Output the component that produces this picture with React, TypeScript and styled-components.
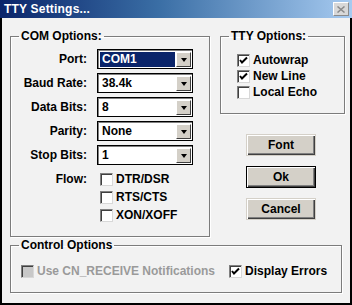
import React from 'react'
import styled, { createGlobalStyle } from 'styled-components'

const GlobalStyle = createGlobalStyle`
  html, body {
    margin: 0;
    padding: 0;
    background: #f2f2f2;
  }
  body {
    font-family: 'Liberation Sans', Arial, sans-serif;
    font-size: 12px;
    font-weight: bold;
    color: #000;
  }
`

const Window = styled.div`
  width: 352px;
  height: 305px;
  box-sizing: border-box;
  border: 2px solid #000;
  border-top: none;
  background: #f2f2f2;
  display: flex;
  flex-direction: column;
`

const TitleBar = styled.div`
  height: 18px;
  margin: 0 -2px;
  padding: 0 3px 0 4px;
  display: flex;
  align-items: center;
  justify-content: space-between;
  background: linear-gradient(to right, #0a246a 0%, #3a6ea5 45%, #a6caf0 100%);
  color: #fff;
  font-size: 12px;
  letter-spacing: 0.2px;
`

const CloseButton = styled.div`
  width: 16px;
  height: 14px;
  box-sizing: border-box;
  background: #d8d8d8;
  border: 1px solid;
  border-color: #fff #8a8a8a #8a8a8a #fff;
  display: flex;
  align-items: center;
  justify-content: center;
`

const Body = styled.div`
  padding: 11px 0 0 8px;
  display: grid;
  grid-template-columns: 200px 125px;
  column-gap: 10px;
`

const Group = styled.fieldset<{ $h: number }>`
  margin: 0;
  padding: 0;
  height: ${({ $h }) => $h}px;
  box-sizing: border-box;
  border: 1px solid #7c7c7c;
  box-shadow: inset 1px 1px 0 #fff, 1px 1px 0 #fff;
  min-width: 0;
`

const Legend = styled.legend`
  margin-left: 8px;
  padding: 0 2px;
  font-size: 12px;
  line-height: 14px;
`

const ComGrid = styled.div`
  display: grid;
  grid-template-columns: 76px 96px;
  column-gap: 10px;
  row-gap: 4px;
  align-items: center;
  padding: 6px 0 0 0;
`

const Label = styled.div`
  text-align: right;
  line-height: 20px;
  align-self: start;
`

const Combo = styled.div`
  height: 20px;
  box-sizing: border-box;
  border: 1px solid #000;
  box-shadow: inset 1px 1px 0 #808080;
  background: #fff;
  display: flex;
  align-items: stretch;
  padding: 2px 1px 1px 2px;
`

const ComboValue = styled.div<{ $selected?: boolean }>`
  flex: 1;
  padding-left: 2px;
  line-height: 15px;
  background: ${({ $selected }) => ($selected ? '#0a246a' : 'transparent')};
  color: ${({ $selected }) => ($selected ? '#fff' : '#000')};
  margin-right: 1px;
`

const DropButton = styled.div`
  width: 15px;
  box-sizing: border-box;
  background: #d4d0c8;
  border: 1px solid;
  border-color: #fff #404040 #404040 #fff;
  display: flex;
  align-items: center;
  justify-content: center;
`

const Arrow = styled.div`
  width: 0;
  height: 0;
  border-left: 3px solid transparent;
  border-right: 3px solid transparent;
  border-top: 4px solid #000;
`

const CheckList = styled.div`
  display: flex;
  flex-direction: column;
  gap: 4px;
  align-self: start;
  padding: 3px 0 0 3px;
`

const CheckRow = styled.label<{ $disabled?: boolean }>`
  display: flex;
  align-items: center;
  gap: 3px;
  line-height: 14px;
  color: ${({ $disabled }) => ($disabled ? '#9a9a9a' : '#000')};
  white-space: nowrap;
`

const Box = styled.span<{ $disabled?: boolean }>`
  width: 13px;
  height: 13px;
  box-sizing: border-box;
  border: 1px solid;
  border-color: #808080 #d8d8d8 #d8d8d8 #808080;
  box-shadow: inset 1px 1px 0 #404040;
  background: ${({ $disabled }) => ($disabled ? '#c8c8c8' : '#fff')};
  display: flex;
  align-items: center;
  justify-content: center;
  flex: none;
`

const TtyList = styled.div`
  display: flex;
  flex-direction: column;
  gap: 2px;
  padding: 10px 0 0 16px;
`

const Buttons = styled.div`
  display: flex;
  flex-direction: column;
  gap: 10px;
  padding: 20px 0 0 26px;
`

const Button = styled.div<{ $default?: boolean }>`
  width: 70px;
  height: 22px;
  box-sizing: border-box;
  background: #d4d0c8;
  border: 1px solid ${({ $default }) => ($default ? '#000' : 'transparent')};
  box-shadow: inset 1px 1px 0 #fff, inset -1px -1px 0 #404040, inset -2px -2px 0 #808080;
  display: flex;
  align-items: center;
  justify-content: center;
  font-size: 12px;
`

const ControlGroup = styled(Group)`
  grid-column: span 2;
  margin-top: -10px;
  width: 332px;
`

const ControlRow = styled.div`
  display: flex;
  align-items: center;
  padding: 12px 0 0 10px;
  gap: 14px;
`

const Check = ({ on }: { on?: boolean }) => (
  <svg width="9" height="9" viewBox="0 0 9 9">
    {on && <path d="M1 4 L3 6.5 L8 1.5" stroke="#000" strokeWidth="2" fill="none" />}
  </svg>
)

const CheckBox = ({ label, on, disabled }: { label: string; on?: boolean; disabled?: boolean }) => (
  <CheckRow $disabled={disabled}>
    <Box $disabled={disabled}>
      <Check on={on} />
    </Box>
    {label}
  </CheckRow>
)

const ComboBox = ({ value, selected }: { value: string; selected?: boolean }) => (
  <Combo>
    <ComboValue $selected={selected}>{value}</ComboValue>
    <DropButton>
      <Arrow />
    </DropButton>
  </Combo>
)

const comFields = [
  { label: 'Port:', value: 'COM1', selected: true },
  { label: 'Baud Rate:', value: '38.4k' },
  { label: 'Data Bits:', value: '8' },
  { label: 'Parity:', value: 'None' },
  { label: 'Stop Bits:', value: '1' },
]

const App = () => {
  return (
    <>
      <GlobalStyle />
      <Window>
        <TitleBar>
          <span>TTY Settings...</span>
          <CloseButton>
            <svg width="8" height="7" viewBox="0 0 8 7">
              <path d="M0.5 0.5 L7.5 6.5 M7.5 0.5 L0.5 6.5" stroke="#8a8a8a" strokeWidth="1.5" />
            </svg>
          </CloseButton>
        </TitleBar>
        <Body>
          <Group $h={208}>
            <Legend>COM Options:</Legend>
            <ComGrid>
              {comFields.map((f) => (
                <React.Fragment key={f.label}>
                  <Label>{f.label}</Label>
                  <ComboBox value={f.value} selected={f.selected} />
                </React.Fragment>
              ))}
              <Label>Flow:</Label>
              <CheckList>
                <CheckBox label="DTR/DSR" />
                <CheckBox label="RTS/CTS" />
                <CheckBox label="XON/XOFF" />
              </CheckList>
            </ComGrid>
          </Group>
          <div>
            <Group $h={85}>
              <Legend>TTY Options:</Legend>
              <TtyList>
                <CheckBox label="Autowrap" on />
                <CheckBox label="New Line" on />
                <CheckBox label="Local Echo" />
              </TtyList>
            </Group>
            <Buttons>
              <Button>Font</Button>
              <Button $default>Ok</Button>
              <Button>Cancel</Button>
            </Buttons>
          </div>
        </Body>
        <Body>
          <ControlGroup $h={55}>
            <Legend>Control Options</Legend>
            <ControlRow>
              <CheckBox label="Use CN_RECEIVE Notifications" disabled />
              <CheckBox label="Display Errors" on />
            </ControlRow>
          </ControlGroup>
        </Body>
      </Window>
    </>
  )
}

export default App
